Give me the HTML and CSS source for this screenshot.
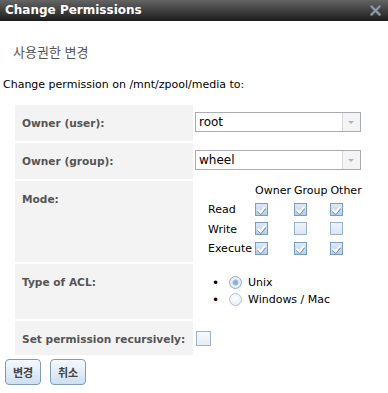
FILE: index.html
```html
<!DOCTYPE html>
<html lang="ko">
<head>
  <meta charset="UTF-8">
  <title>Change Permissions</title>
  <link rel="stylesheet" href="styles.css">
</head>
<body>
  <div class="dialog">
    <div class="dialog-title">
      Change Permissions
      <svg class="close" width="11" height="11" viewBox="0 0 11 11">
        <path d="M1.5 1.5 L9.5 9.5 M9.5 1.5 L1.5 9.5" stroke="#5d6876" stroke-width="3.2" stroke-linecap="square"/>
        <path d="M1.5 1.5 L9.5 9.5 M9.5 1.5 L1.5 9.5" stroke="#9aa6b4" stroke-width="1.4" stroke-linecap="square"/>
      </svg>
    </div>

    <p class="subtitle">사용권한 변경</p>
    <p class="intro">Change permission on /mnt/zpool/media to:</p>

    <table class="form">
      <tr>
        <th>Owner (user):</th>
        <td class="field">
          <div class="select"><span>root</span><i class="arrow"></i></div>
        </td>
      </tr>
      <tr>
        <th>Owner (group):</th>
        <td class="field">
          <div class="select"><span>wheel</span><i class="arrow"></i></div>
        </td>
      </tr>
      <tr>
        <th>Mode:</th>
        <td class="mode-cell">
          <table class="mode">
            <tr><td></td><td>Owner</td><td>Group</td><td>Other</td></tr>
            <tr><td>Read</td><td><span class="check on"></span></td><td><span class="check on"></span></td><td><span class="check on"></span></td></tr>
            <tr><td>Write</td><td><span class="check on"></span></td><td><span class="check"></span></td><td><span class="check"></span></td></tr>
            <tr><td>Execute</td><td><span class="check on"></span></td><td><span class="check on"></span></td><td><span class="check on"></span></td></tr>
          </table>
        </td>
      </tr>
      <tr>
        <th>Type of ACL:</th>
        <td class="acl-cell">
          <ul class="acl">
            <li><span class="radio on"></span>Unix</li>
            <li><span class="radio"></span>Windows / Mac</li>
          </ul>
        </td>
      </tr>
      <tr>
        <th>Set permission recursively:</th>
        <td class="field"><span class="check plain"></span></td>
      </tr>
    </table>

    <div class="buttons">
      <button class="btn">변경</button>
      <button class="btn">취소</button>
    </div>
  </div>
</body>
</html>
```

FILE: styles.css
```css
body {
  margin: 0;
  background: #fff;
  font-family: "DejaVu Sans", Verdana, "Noto Sans CJK KR", sans-serif;
  font-size: 11px;
  color: #000;
}
.dialog-title {
  position: relative;
  height: 21px;
  line-height: 21px;
  padding-left: 5px;
  color: #fff;
  font-weight: bold;
  font-size: 12px;
  background: linear-gradient(#646464, #1c1c1c);
}
.close {
  position: absolute;
  right: 7px;
  top: 5px;
}
.subtitle {
  margin: 23px 0 0 13px;
  font-family: "Noto Sans CJK KR", sans-serif;
  font-size: 13px;
  line-height: 16px;
  color: #555;
}
.intro {
  margin: 18px 0 0 3px;
  line-height: 14px;
}
.form {
  margin: 11px 0 0 13px;
  border-spacing: 2px;
}
.form th {
  width: 164px;
  background: #f3f3f3;
  color: #555;
  font-size: 10.6px;
  text-align: left;
  vertical-align: top;
  padding: 11px 7px 0;
  line-height: 14px;
  white-space: nowrap;
}
.form td {
  padding: 0;
  vertical-align: top;
}
.field {
  padding: 7px 0 9px 0 !important;
}
.select {
  display: flex;
  width: 164px;
  height: 18px;
  border: 1px solid #a9adb2;
  font-size: 12px;
  line-height: 18px;
}
.select span {
  flex: 1;
  padding-left: 3px;
}
.arrow {
  width: 17px;
  border-left: 1px solid #d8d8d8;
  background: #f4f4f4;
  position: relative;
}
.arrow::after {
  content: "";
  position: absolute;
  left: 5px;
  top: 8px;
  border: 3px solid transparent;
  border-top: 3px solid #b0b4ba;
}
.mode {
  margin-left: 13px;
  border-spacing: 0;
}
.mode td {
  height: 19.5px;
  padding: 0 3px 0 0 !important;
  vertical-align: middle !important;
  line-height: 14px;
}
.mode-cell {
  padding-bottom: 3px !important;
}
.check {
  display: inline-block;
  width: 11px;
  height: 11px;
  border: 1px solid #9db3cb;
  background: linear-gradient(#eef3f9, #dbe6f2);
  vertical-align: middle;
  margin-top: -2px;
}
.check.on {
  border-color: #7d9dbe;
  background: linear-gradient(#dde9f6, #b9cfe9);
  position: relative;
}
.check.on::after {
  content: "";
  position: absolute;
  left: 3px;
  top: 1px;
  width: 3px;
  height: 6px;
  border: solid #fff;
  border-width: 0 2px 2px 0;
  transform: rotate(40deg);
  box-shadow: 1px 1px 0 #6f8fb3;
}
.check.plain {
  width: 13px;
  height: 13px;
  margin-left: 1px;
  margin-top: 3px;
  background: linear-gradient(#f7f9fc, #e6edf6);
}
.acl-cell {
  padding: 10px 0 11px !important;
}
.acl {
  list-style: none;
  margin: 0;
  padding-left: 17px;
}
.acl li {
  display: flex;
  align-items: center;
  height: 17px;
}
.acl li::before {
  content: "•";
  width: 17px;
  font-size: 12px;
}
.radio {
  width: 11px;
  height: 11px;
  margin-right: 6px;
  border: 1px solid #b7c2cd;
  border-radius: 50%;
  background: radial-gradient(circle at 50% 40%, #fff, #e3e8ee);
}
.radio.on {
  border-color: #98aec5;
  background: radial-gradient(circle, #7ea7cd 0, #9dbcda 2.5px, #e9f0f7 3.5px, #dbe4ee 100%);
}
.buttons {
  display: flex;
  gap: 9px;
  margin: 2px 0 0 5px;
}
.btn {
  width: 36px;
  height: 26px;
  padding: 0;
  border: 1px solid #7f9cba;
  border-radius: 4px;
  background: linear-gradient(#f6f9fd, #cddff2);
  font-family: "Noto Sans CJK KR", sans-serif;
  font-size: 11px;
  font-weight: bold;
  color: #444;
}
```
